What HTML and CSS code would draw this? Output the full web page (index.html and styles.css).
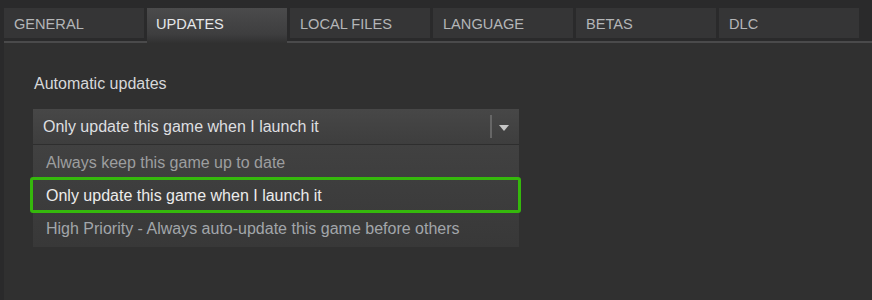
FILE: index.html
```html
<!DOCTYPE html>
<html>

<head>
    <title>Game Properties - Updates</title>
    <link rel="stylesheet" href="styles.css">
</head>

<body>
    <div class="window">
        <div class="tabbar">
            <div class="tab">GENERAL</div>
            <div class="tab active">UPDATES</div>
            <div class="tab">LOCAL FILES</div>
            <div class="tab">LANGUAGE</div>
            <div class="tab">BETAS</div>
            <div class="tab">DLC</div>
        </div>

        <div class="panel">
            <div class="label">Automatic updates</div>

            <div class="dropdown">
                <div class="dropdown-value">
                    <span>Only update this game when I launch it</span>
                    <span class="divider"></span>
                    <span class="arrow"></span>
                </div>
                <div class="dropdown-list">
                    <div class="option first">Always keep this game up to date</div>
                    <div class="option selected">Only update this game when I launch it</div>
                    <div class="option muted">High Priority - Always auto-update this game before others</div>
                </div>
            </div>
        </div>
    </div>
</body>

</html>
```

FILE: styles.css
```css
body {
    margin: 0;
    background-color: #2a2a2b;
    font-family: 'Liberation Sans', Arial, sans-serif;
    color: #d4d4d4;
}

.window {
    margin-left: 4px;
    height: 300px;
    display: flex;
    flex-direction: column;
}

/* Tabs */
.tabbar {
    display: flex;
    align-items: flex-start;
    gap: 3px;
    height: 33px;
    padding-top: 8px;
    border-bottom: 2px solid #4a4a4b;
}

.tab {
    width: 140px;
    height: 30px;
    box-sizing: border-box;
    padding-left: 10px;
    line-height: 33px;
    font-size: 14.6px;
    color: #b4b6b8;
    background-color: #353536;
}

.tab.active {
    height: 35px;
    margin-bottom: -2px;
    padding-left: 9px;
    color: #e6e8ea;
    background: linear-gradient(#4b4b4c, #3e3e3f 75%, #313131);
}

/* Panel */
.panel {
    flex: 1;
    background-color: #303030;
    padding: 32px 0 0 29px;
}

.label {
    font-size: 16px;
    line-height: 18px;
    padding-left: 1px;
    color: #d6d8da;
}

.dropdown {
    width: 486px;
    margin-top: 16px;
}

.dropdown-value {
    display: flex;
    align-items: center;
    height: 35px;
    padding-left: 10px;
    font-size: 16px;
    color: #dedfe0;
    background: linear-gradient(#474747, #3e3e3e);
    border-bottom: 1px solid #2e2e2e;
}

.dropdown-value span:first-child {
    flex: 1;
}

.divider {
    width: 2px;
    height: 23px;
    background-color: #666;
    margin-right: 7px;
}

.arrow {
    width: 0;
    height: 0;
    margin: 3px 10px 0 0;
    border-left: 5.5px solid transparent;
    border-right: 5.5px solid transparent;
    border-top: 6px solid #c6c6c6;
}

.dropdown-list {
    background: linear-gradient(#414141, #383838);
    padding-bottom: 2px;
}

.option {
    height: 33px;
    line-height: 33px;
    padding-left: 13px;
    font-size: 16px;
    color: #9d9e9f;
}

.option.first {
    line-height: 36px;
}

.option.selected {
    position: relative;
    height: 34px;
    line-height: 35px;
    color: #ececec;
}

/* green highlight ring around the picked option */
.option.selected::after {
    content: "";
    position: absolute;
    top: -1px;
    bottom: -1px;
    left: -3px;
    right: -2px;
    border: 3px solid #35b80c;
    border-radius: 3px;
}

.option.muted {
    color: #a2a6aa;
}
```
